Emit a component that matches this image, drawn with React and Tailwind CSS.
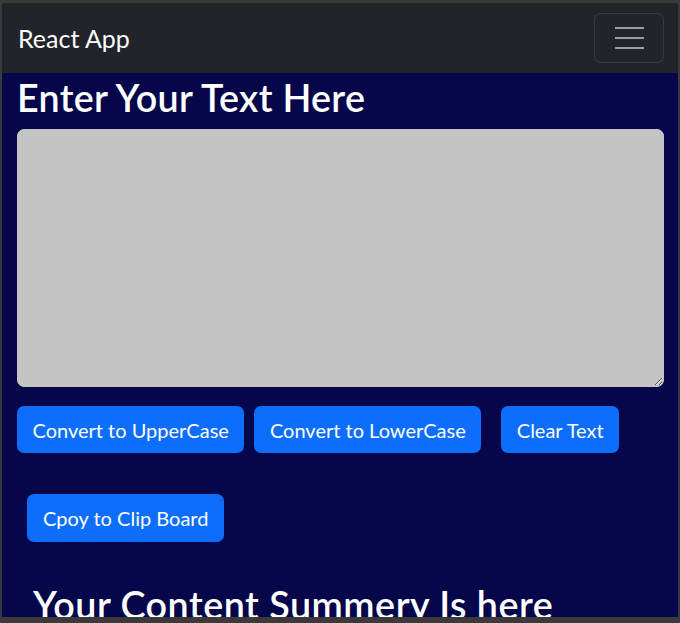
import { useState } from 'react'

export default function App() {
    const [text, setText] = useState('')

    return (
        <div
            className="h-[623px] overflow-hidden bg-[#3a3a3a] pt-[3px] px-[2px] pb-[6px]"
            style={{ fontFamily: 'Lato, "Noto Sans", sans-serif' }}
        >
            <div className="h-full overflow-hidden bg-[#06064a]">
                {/* navbar */}
                <nav className="h-[70px] bg-[#212529] flex items-center justify-between pl-[16px] pr-[14px]">
                    <span className="text-[25px] text-white leading-none">React App</span>
                    <button className="w-[70px] h-[50px] rounded-[7px] border border-white/10 flex flex-col items-center justify-center gap-[7.5px]">
                        <span className="block w-[29px] h-[2.5px] bg-white/55"></span>
                        <span className="block w-[29px] h-[2.5px] bg-white/55"></span>
                        <span className="block w-[29px] h-[2.5px] bg-white/55"></span>
                    </button>
                </nav>

                <div className="pl-[15px] pr-[14px]">
                    <h1 className="pt-[2px] text-[37.7px] leading-[1.2] font-semibold tracking-[0.3px] text-white mb-[9px]">
                        Enter Your Text Here
                    </h1>
                    <textarea
                        className="block w-full h-[258px] rounded-[7px] bg-[#c4c4c4] border border-[#c4c4c4] outline-none px-3 py-2"
                        value={text}
                        onChange={(e) => setText(e.target.value)}
                    ></textarea>

                    <div className="flex flex-wrap mt-[19px]">
                        <button className="h-[47px] px-[15.5px] rounded-[7px] bg-[#0d6efd] text-white text-[20px]">
                            Convert to UpperCase
                        </button>
                        <button className="h-[47px] px-[15.5px] ml-[10px] rounded-[7px] bg-[#0d6efd] text-white text-[20px]">
                            Convert to LowerCase
                        </button>
                        <button className="h-[47px] px-[15.5px] ml-[20px] rounded-[7px] bg-[#0d6efd] text-white text-[20px]">
                            Clear Text
                        </button>
                    </div>
                    <div className="flex mt-[41px]">
                        <button className="h-[48px] px-[16px] ml-[10px] rounded-[7px] bg-[#0d6efd] text-white text-[20px]">
                            Cpoy to Clip Board
                        </button>
                    </div>

                    {/* summary */}
                    <h2 className="mt-[40px] ml-[16px] text-[37.7px] leading-[1.2] font-semibold tracking-[0.5px] text-white">
                        Your Content Summery Is here
                    </h2>
                </div>
            </div>
        </div>
    )
}
